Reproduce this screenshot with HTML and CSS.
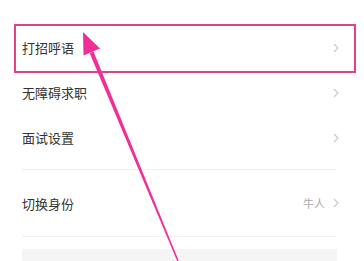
FILE: index.html
```html
<!DOCTYPE html>
<html lang="zh">
<head>
<meta charset="utf-8">
<link rel="stylesheet" href="styles.css">
</head>
<body>
<div class="page">
  <div class="list">
    <div class="row"><span class="label">打招呼语</span><span class="right"><svg class="chev" width="6" height="10" viewBox="0 0 6 10"><path d="M1 1 L5 5 L1 9" fill="none" stroke="#c9c9c9" stroke-width="1.2"/></svg></span></div>
    <div class="row"><span class="label">无障碍求职</span><span class="right"><svg class="chev" width="6" height="10" viewBox="0 0 6 10"><path d="M1 1 L5 5 L1 9" fill="none" stroke="#c9c9c9" stroke-width="1.2"/></svg></span></div>
    <div class="row"><span class="label">面试设置</span><span class="right"><svg class="chev" width="6" height="10" viewBox="0 0 6 10"><path d="M1 1 L5 5 L1 9" fill="none" stroke="#c9c9c9" stroke-width="1.2"/></svg></span></div>
  </div>
  <div class="sep"></div>
  <div class="row tall"><span class="label">切换身份</span><span class="right"><span class="value">牛人</span><svg class="chev" width="6" height="10" viewBox="0 0 6 10"><path d="M1 1 L5 5 L1 9" fill="none" stroke="#c9c9c9" stroke-width="1.2"/></svg></span></div>
  <div class="sep"></div>
  <div class="band"></div>

  <div class="highlight"></div>
  <svg class="arrow" width="364" height="261" viewBox="0 0 364 261">
    <polygon points="83,32 100,48.5 83.5,55.5" fill="#ef2f97"/>
    <polygon points="89.6,53 93.5,51.6 178.8,261 177.2,261" fill="#ef2f97"/>
  </svg>
</div>
</body>
</html>
```
FILE: styles.css
```css
html, body {
  margin: 0;
  padding: 0;
  background: #ffffff;
}
body {
  font-family: "Noto Sans CJK SC", "Noto Sans", sans-serif;
  color: #333333;
}
.page {
  position: relative;
  width: 364px;
  height: 261px;
  overflow: hidden;
  padding: 25px 27px 0 22px;
  box-sizing: border-box;
}
.list {
  display: flex;
  flex-direction: column;
  padding-bottom: 9px;
}
.row {
  height: 45px;
  display: flex;
  align-items: center;
  justify-content: space-between;
}
.row.tall {
  height: 66px;
}
.label {
  font-size: 13px;
  line-height: 1;
}
.right {
  display: flex;
  align-items: center;
  gap: 8px;
}
.value {
  font-size: 11px;
  color: #aaaaaa;
  line-height: 1;
}
.chev {
  display: block;
  margin-right: -2px;
}
.sep {
  height: 1px;
  background: #f0f0f0;
}
.band {
  margin-top: 12px;
  height: 14px;
  background: #f5f5f5;
}
.highlight {
  position: absolute;
  left: 14px;
  top: 24px;
  width: 342px;
  height: 49px;
  border: 2px solid #e0418a;
  box-sizing: border-box;
}
.arrow {
  position: absolute;
  left: 0;
  top: 0;
}
```
